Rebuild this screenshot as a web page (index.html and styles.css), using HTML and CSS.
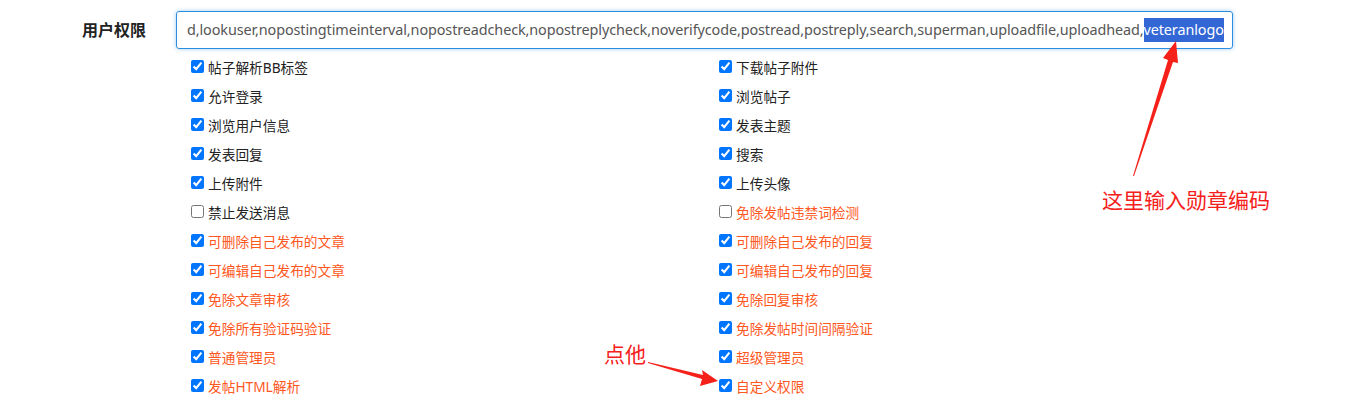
FILE: index.html
```html
<!DOCTYPE html>
<html lang="zh-CN">
<head>
  <meta charset="UTF-8" />
  <title>用户权限</title>
  <link rel="stylesheet" href="styles.css">
</head>
<body>
  <main class="page">
    <div class="form-row">
      <label class="form-label">用户权限</label>
      <div class="form-field">
        <div class="perm-input">d,lookuser,nopostingtimeinterval,nopostreadcheck,nopostreplycheck,noverifycode,postread,postreply,search,superman,uploadfile,uploadhead,<span class="selected">veteranlogo</span></div>
        <div class="perm-list">
          <label class="perm"><input type="checkbox" checked> 帖子解析BB标签</label>
          <label class="perm"><input type="checkbox" checked> 下载帖子附件</label>
          <label class="perm"><input type="checkbox" checked> 允许登录</label>
          <label class="perm"><input type="checkbox" checked> 浏览帖子</label>
          <label class="perm"><input type="checkbox" checked> 浏览用户信息</label>
          <label class="perm"><input type="checkbox" checked> 发表主题</label>
          <label class="perm"><input type="checkbox" checked> 发表回复</label>
          <label class="perm"><input type="checkbox" checked> 搜索</label>
          <label class="perm"><input type="checkbox" checked> 上传附件</label>
          <label class="perm"><input type="checkbox" checked> 上传头像</label>
          <label class="perm"><input type="checkbox"> 禁止发送消息</label>
          <label class="perm admin"><input type="checkbox"> 免除发帖违禁词检测</label>
          <label class="perm admin"><input type="checkbox" checked> 可删除自己发布的文章</label>
          <label class="perm admin"><input type="checkbox" checked> 可删除自己发布的回复</label>
          <label class="perm admin"><input type="checkbox" checked> 可编辑自己发布的文章</label>
          <label class="perm admin"><input type="checkbox" checked> 可编辑自己发布的回复</label>
          <label class="perm admin"><input type="checkbox" checked> 免除文章审核</label>
          <label class="perm admin"><input type="checkbox" checked> 免除回复审核</label>
          <label class="perm admin"><input type="checkbox" checked> 免除所有验证码验证</label>
          <label class="perm admin"><input type="checkbox" checked> 免除发帖时间间隔验证</label>
          <label class="perm admin"><input type="checkbox" checked> 普通管理员</label>
          <label class="perm admin"><input type="checkbox" checked> 超级管理员</label>
          <label class="perm admin"><input type="checkbox" checked> 发帖HTML解析</label>
          <label class="perm admin"><input type="checkbox" checked> 自定义权限</label>
        </div>
      </div>
    </div>
  </main>

  <!-- annotations drawn over the screenshot -->
  <div class="note note-code">这里输入勋章编码</div>
  <div class="note note-click">点他</div>
  <svg class="arrows" width="1345" height="410" viewBox="0 0 1345 410">
    <polygon fill="#f5201a" points="1133,176 1168,60 1163,58 1176,41 1178,63 1173,62 1134,176"/>
    <polygon fill="#f5201a" points="648,362 703,375 702,370 718,381 700,386 702,379 648,363"/>
  </svg>
</body>
</html>
```

FILE: styles.css
```css
* {
  box-sizing: border-box;
}
body {
  margin: 0;
  font-family: "Noto Sans", "Noto Sans CJK SC", sans-serif;
  background-color: #fff;
  color: #212529;
  position: relative;
  width: 1345px;
  height: 410px;
  overflow: hidden;
}
.page {
  padding: 11px 0 0 82px;
}
.form-row {
  display: flex;
  align-items: flex-start;
}
.form-label {
  width: 94px;
  height: 38px;
  line-height: 38px;
  font-size: 16px;
  font-weight: 700;
  color: #222;
}
.form-field {
  width: 1057px;
}
.perm-input {
  height: 38px;
  line-height: 36px;
  padding: 0 10px;
  border: 1px solid #2b8ee0;
  border-radius: 3px;
  box-shadow: 0 0 4px rgba(43, 142, 224, 0.45);
  font-size: 14.4px;
  color: #555;
  white-space: nowrap;
  overflow: hidden;
  letter-spacing: -0.1px;
}
.selected {
  background-color: #3367d6;
  color: #fff;
  padding: 2px 0 3px;
}
.perm-list {
  display: grid;
  grid-template-columns: 528px 528px;
  grid-auto-rows: 29px;
  padding: 3px 0 0 15px;
}
.perm {
  display: flex;
  align-items: center;
  font-size: 13.7px;
  color: #222;
}
.perm input {
  width: 13px;
  height: 13px;
  margin: 0 4px 0 0;
  accent-color: #0075ff;
}
.perm.admin {
  color: #ff5722;
}
.note {
  position: absolute;
  color: #f5201a;
  font-size: 21px;
  line-height: 1;
}
.note-code {
  left: 1102px;
  top: 190px;
}
.note-click {
  left: 604px;
  top: 344px;
}
.arrows {
  position: absolute;
  left: 0;
  top: 0;
  pointer-events: none;
}
```
